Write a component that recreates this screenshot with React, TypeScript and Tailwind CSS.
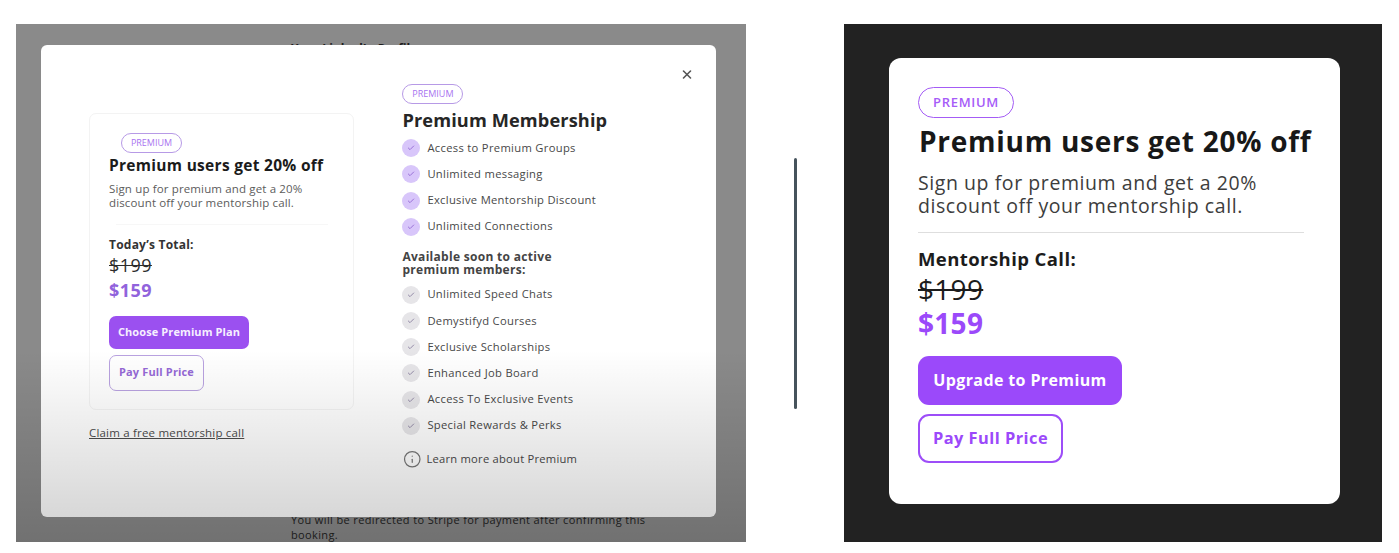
import { Check, Info, X } from "lucide-react";

const activePerks = [
  "Access to Premium Groups",
  "Unlimited messaging",
  "Exclusive Mentorship Discount",
  "Unlimited Connections",
];

const upcomingPerks = [
  "Unlimited Speed Chats",
  "Demystifyd Courses",
  "Exclusive Scholarships",
  "Enhanced Job Board",
  "Access To Exclusive Events",
  "Special Rewards & Perks",
];

function SmallBadge() {
  return (
    <span className="flex h-5 w-[61px] items-center justify-center rounded-full border border-[#b79ae6] text-[9px] font-medium text-[#a873f0]">
      PREMIUM
    </span>
  );
}

function PerkList({ items, active }: { items: string[]; active: boolean }) {
  return (
    <ul>
      {items.map((item) => (
        <li key={item} className="flex h-[26.2px] items-center gap-[7px]">
          <span
            className={
              active
                ? "flex size-[18px] items-center justify-center rounded-full bg-[#d8c6fa]"
                : "flex size-[18px] items-center justify-center rounded-full bg-[#e6e5e8]"
            }
          >
            <Check
              className={active ? "size-2 text-[#9a72d8]" : "size-2 text-[#948ba8]"}
              strokeWidth={3}
            />
          </span>
          <span className="text-[11.2px] tracking-[0.32px] text-[#484848]">{item}</span>
        </li>
      ))}
    </ul>
  );
}

function OfferCard() {
  return (
    <div className="flex h-[297px] w-[265px] flex-col items-start rounded-[7px] border border-[#f3f3f3] pt-[18.5px] pl-[19px]">
      <div className="ml-3">
        <SmallBadge />
      </div>
      <h2 className="mt-[2px] text-[15.5px] leading-5 font-bold tracking-[0.29px] text-[#1b1b1b]">
        Premium users get 20% off
      </h2>
      <p className="mt-[7px] text-[11.5px] leading-[14.3px] tracking-[0.14px] text-[#5c5c5c]">
        Sign up for premium and get a 20%
        <br />
        discount off your mentorship call.
      </p>
      <div className="mt-[14px] ml-[7px] h-px w-[212px] bg-[#f7f7f7]" />
      <p className="mt-[12px] text-[12px] leading-4 font-bold tracking-[0.22px] text-[#333]">
        Today’s Total:
      </p>
      <p className="text-[18px] leading-6 tracking-[0.44px] text-[#2c2c2c] line-through">$199</p>
      <p className="mt-[1px] text-[18px] leading-6 font-bold tracking-[0.44px] text-[#9163dc]">$159</p>
      <button className="mt-[13.5px] h-[33px] w-[140px] rounded-[7px] bg-[#9b50f0] text-[11px] font-bold tracking-[0.1px] text-[#f6efff]">
        Choose Premium Plan
      </button>
      <button className="mt-[6.5px] h-9 w-[95px] rounded-[7px] border border-[#b9a2e0] pb-px text-[11px] font-bold tracking-[0.15px] text-[#9569d6]">
        Pay Full Price
      </button>
    </div>
  );
}

function MembershipDialog() {
  return (
    <section className="relative h-[518px] w-[730px] overflow-hidden bg-[#8a8a8a] pt-[21px] pl-[25px]">
      <div className="absolute top-[16.5px] left-[275px] text-[12px] leading-4 font-bold text-[#1d1d1d]">
        Your LinkedIn Profile
      </div>
      <p className="absolute top-[489px] left-[275px] text-[11px] leading-[14.6px] tracking-[0.37px] whitespace-nowrap text-[#222]">
        You will be redirected to Stripe for payment after confirming this
        <br />
        booking.
      </p>

      <div className="relative flex h-[472px] w-[675px] items-start rounded-[6px] bg-white pl-12">
        <div className="w-[313.4px] pt-[68px]">
          <OfferCard />
          <a className="mt-[15px] block w-max text-[11.5px] leading-4 tracking-[0.19px] text-[#4c4c4c] underline decoration-1 underline-offset-1">
            Claim a free mentorship call
          </a>
        </div>

        <div className="flex-1 pt-[39px]">
          <SmallBadge />
          <h1 className="mt-[3.5px] text-[18.2px] leading-6 font-bold tracking-[0.12px] text-[#262626]">
            Premium Membership
          </h1>
          <div className="mt-[3.6px]">
            <PerkList items={activePerks} active />
          </div>
          <h3 className="mt-[10.6px] text-[12px] leading-[13px] font-bold tracking-[0.3px] text-[#444]">
            Available soon to active
            <br />
            premium members:
          </h3>
          <div className="mt-[5.3px]">
            <PerkList items={upcomingPerks} active={false} />
          </div>
          <div className="mt-[10.5px] flex h-5 items-center gap-[6px]">
            <Info className="ml-[0.5px] size-[18.5px] text-[#777]" strokeWidth={1.6} />
            <span className="-ml-px text-[11.2px] tracking-[0.24px] text-[#484848]">
              Learn more about Premium
            </span>
          </div>
        </div>

        <button className="mt-[22px] mr-[22px] flex size-[14px] items-center justify-center text-[#555]">
          <X className="size-[15px]" strokeWidth={2.8} />
        </button>
      </div>

      <div className="pointer-events-none absolute inset-x-0 bottom-0 h-[192px] bg-linear-to-b from-black/0 to-black/18" />
    </section>
  );
}

function DiscountPanel() {
  return (
    <section className="h-[518px] w-[538px] bg-[#222] pt-[34px] pl-[45px]">
      <div className="flex h-[446px] w-[451px] flex-col items-start rounded-[12px] bg-white pt-[29px] pl-[29px]">
        <span className="flex h-[31px] w-24 items-center justify-center rounded-full border-[1.5px] border-[#a45cf5] text-[13px] font-semibold tracking-[0.7px] text-[#a65cf8]">
          PREMIUM
        </span>
        <h2 className="mt-[7px] pl-px text-[28px] leading-8 font-bold tracking-[0.73px] whitespace-nowrap text-[#181818]">
          Premium users get 20% off
        </h2>
        <p className="mt-[14px] text-[19.5px] leading-[23px] tracking-[0.57px] text-[#3d3d3d]">
          Sign up for premium and get a 20%
          <br />
          discount off your mentorship call.
        </p>
        <div className="mt-[15px] h-px w-[386px] bg-[#dedede]" />
        <p className="mt-[14px] text-[18.5px] leading-6 font-bold tracking-[0.42px] text-[#1c1c1c]">
          Mentorship Call:
        </p>
        <p className="mt-px text-[28px] leading-[34px] tracking-[0.3px] text-[#1c1c1c] line-through decoration-2">
          $199
        </p>
        <p className="text-[28px] leading-[34px] font-bold tracking-[0.3px] text-[#9b49fa]">$159</p>
        <button className="mt-4 h-[49px] w-[204px] rounded-[11px] bg-[#9b49fa] pb-px text-[16px] font-bold tracking-[0.38px] text-white">
          Upgrade to Premium
        </button>
        <button className="mt-[9px] h-[49px] w-[145px] rounded-[11px] border-2 border-[#9d4df8] text-[16.4px] font-bold tracking-[0.46px] text-[#9b49fa]">
          Pay Full Price
        </button>
      </div>
    </section>
  );
}

export default function App() {
  return (
    <main className="flex h-[553px] w-[1399px] items-start overflow-hidden bg-white pt-6 pl-4 font-['Open_Sans',sans-serif]">
      <MembershipDialog />
      <div className="mt-[134px] mr-[47px] ml-12 h-[251px] w-[3px] rounded-full bg-[#46535c]" />
      <DiscountPanel />
    </main>
  );
}
